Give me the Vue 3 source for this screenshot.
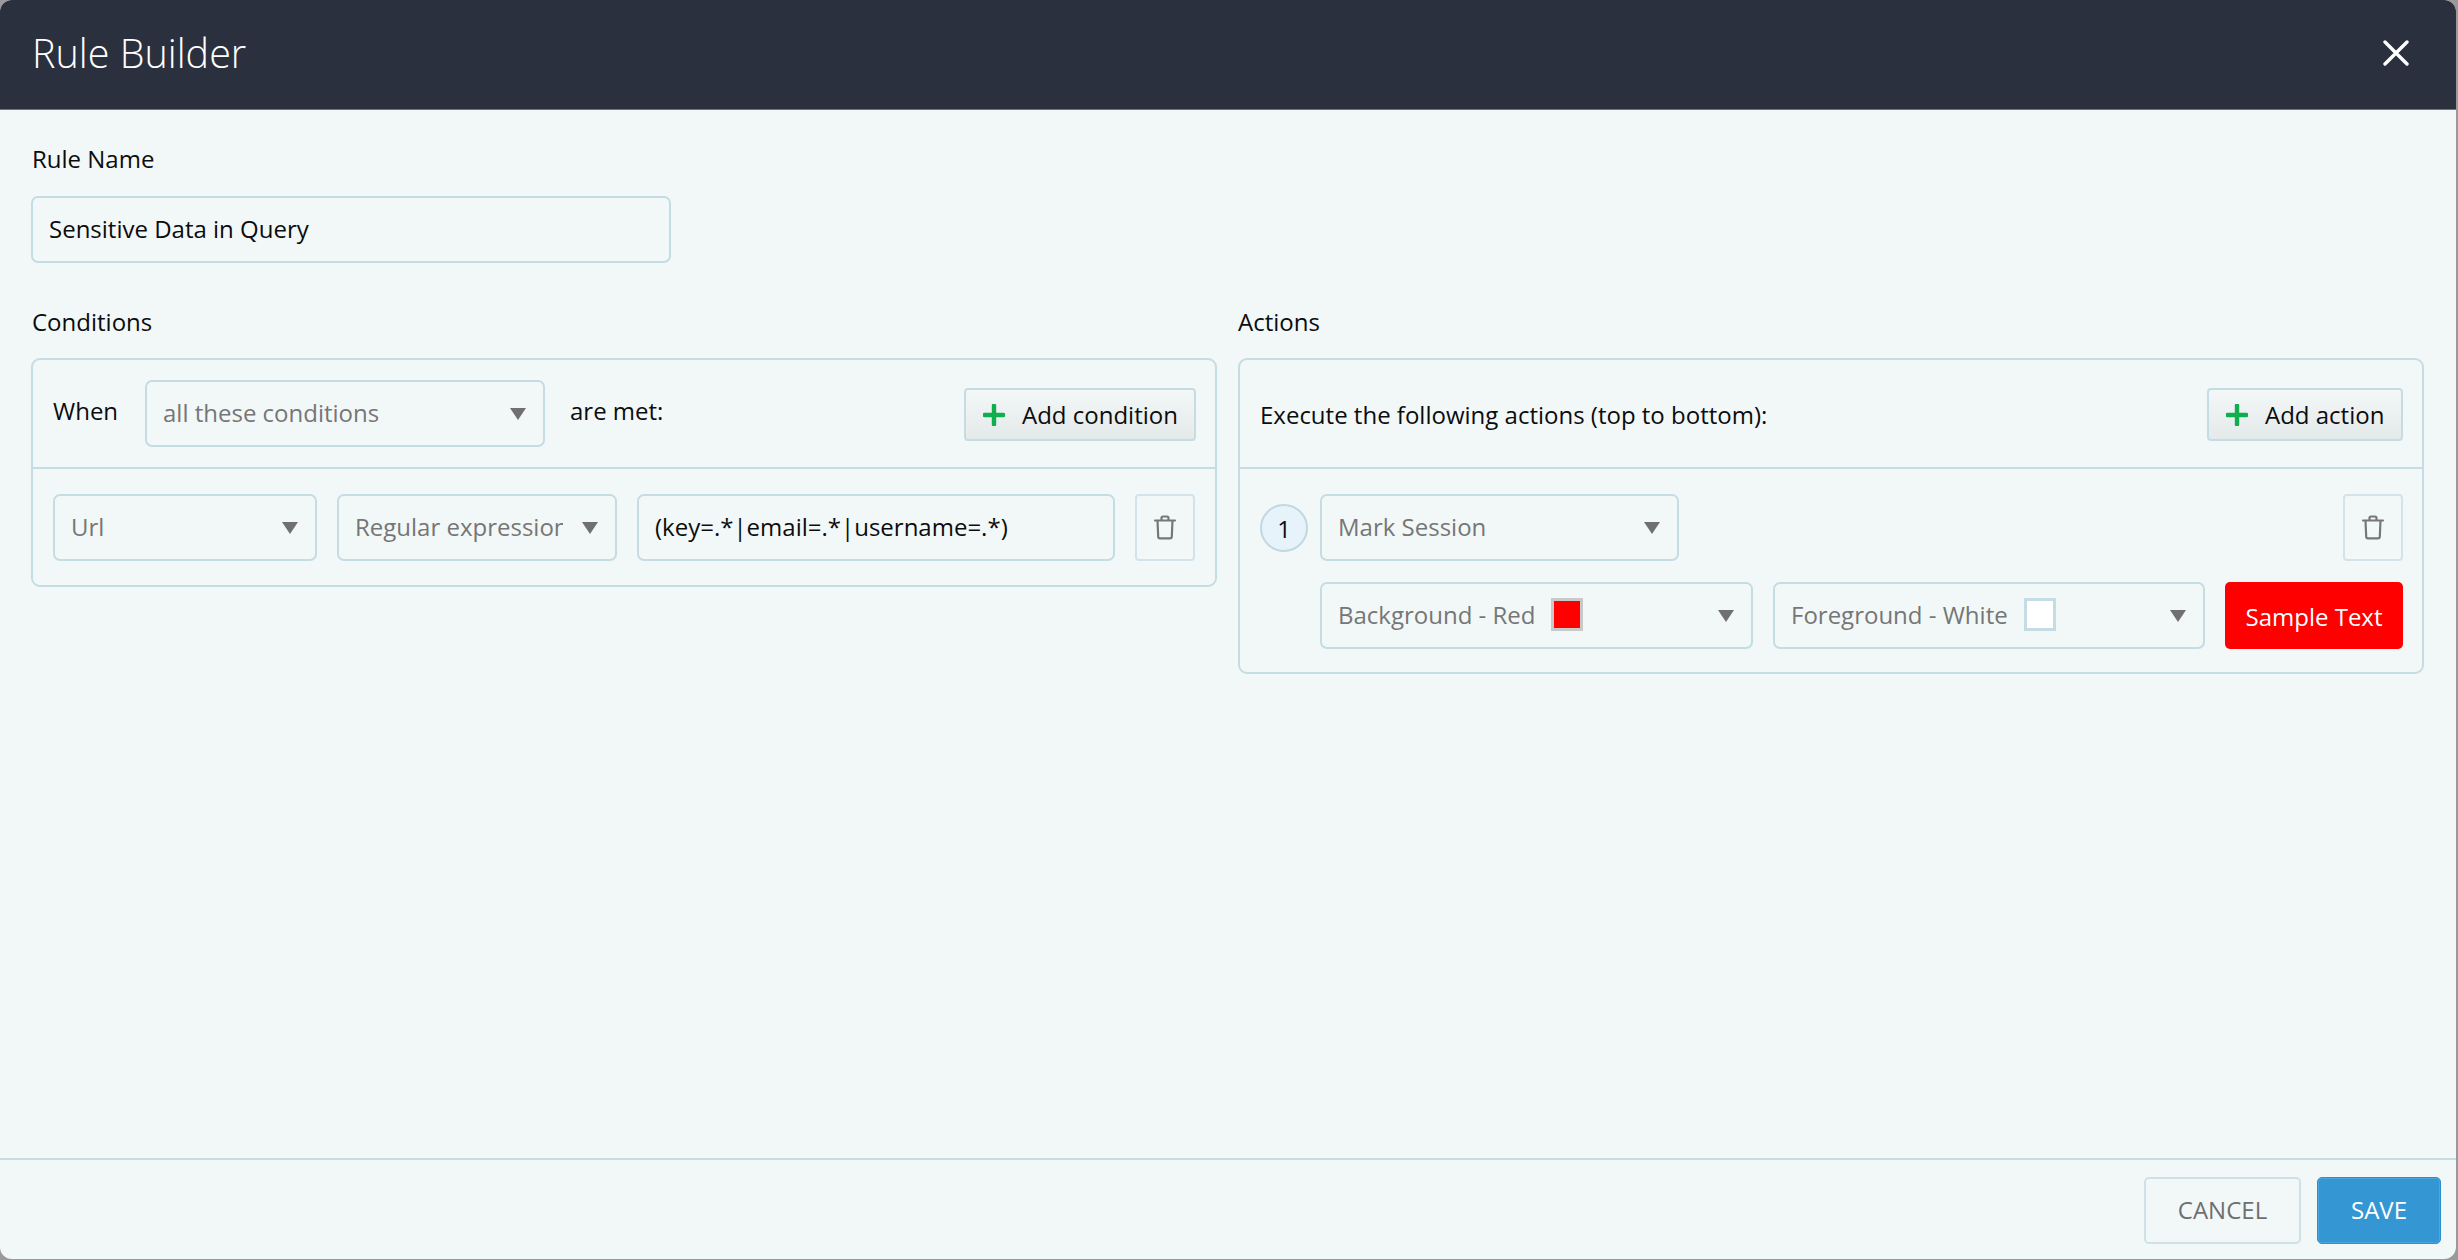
<script setup>
const trashPath = 'M2 5.500h20M8.500 5.500V3c0-.8.6-1.500 1.500-1.500h4c.9 0 1.500.7 1.500 1.500v2.500M4.500 5.500l.7 16c0 1 .8 1.900 1.800 1.900h10c1 0 1.800-.9 1.800-1.900l.7-16';
</script>

<template>
  <div class="shell">
    <div class="window">
      <header class="head">
        <h1 class="title">Rule Builder</h1>
        <svg class="close" width="26" height="26" viewBox="0 0 26 26" aria-hidden="true">
          <path d="M2 2L24 24M24 2L2 24" stroke="#fff" stroke-width="3.4" stroke-linecap="round" fill="none" />
        </svg>
      </header>

      <main class="content">
        <label class="label name-label">Rule Name</label>
        <div class="field name-field">Sensitive Data in Query</div>

        <div class="columns">
          <section class="col">
            <div class="label col-label">Conditions</div>
            <div class="panel">
              <div class="panel-head">
                <span class="when">When</span>
                <div class="field select all-sel"><span class="muted">all these conditions</span><i class="caret"></i></div>
                <span class="met">are met:</span>
                <button class="add add-cond">
                  <svg class="plus" width="22" height="22" viewBox="0 0 22 22"><path d="M11 1.500v19M1.500 11h19" stroke="#0fae4f" stroke-width="4.400" stroke-linecap="round" fill="none" /></svg>
                  Add condition
                </button>
              </div>
              <div class="panel-body cond-row">
                <div class="field select url-sel"><span class="muted">Url</span><i class="caret"></i></div>
                <div class="field select reg-sel"><span class="muted clip">Regular expression</span><i class="caret"></i></div>
                <div class="field value">(key=.*|email=.*|username=.*)</div>
                <button class="trash">
                  <svg width="24" height="25" viewBox="0 0 24 25"><path :d="trashPath" stroke="#777" stroke-width="2.200" fill="none" stroke-linecap="round" stroke-linejoin="round" /></svg>
                </button>
              </div>
            </div>
          </section>

          <section class="col">
            <div class="label col-label act-label">Actions</div>
            <div class="panel">
              <div class="panel-head">
                <span class="exec">Execute the following actions (top to bottom):</span>
                <button class="add add-act">
                  <svg class="plus" width="22" height="22" viewBox="0 0 22 22"><path d="M11 1.500v19M1.500 11h19" stroke="#0fae4f" stroke-width="4.400" stroke-linecap="round" fill="none" /></svg>
                  Add action
                </button>
              </div>
              <div class="panel-body action-body">
                <div class="num">1</div>
                <div class="action-rows">
                  <div class="action-row">
                    <div class="field select mark-sel"><span class="muted">Mark Session</span><i class="caret"></i></div>
                    <button class="trash">
                      <svg width="24" height="25" viewBox="0 0 24 25"><path :d="trashPath" stroke="#777" stroke-width="2.200" fill="none" stroke-linecap="round" stroke-linejoin="round" /></svg>
                    </button>
                  </div>
                  <div class="action-row second">
                    <div class="field select bg-sel"><span class="muted">Background - Red</span><span class="swatch red"></span><i class="caret"></i></div>
                    <div class="field select fg-sel"><span class="muted">Foreground - White</span><span class="swatch white"></span><i class="caret"></i></div>
                    <div class="sample">Sample Text</div>
                  </div>
                </div>
              </div>
            </div>
          </section>
        </div>
      </main>

      <footer class="foot">
        <button class="btn cancel">CANCEL</button>
        <button class="btn save">SAVE</button>
      </footer>
    </div>
  </div>
</template>

<style scoped>
.shell {
  width: 2458px;
  height: 1260px;
  box-sizing: border-box;
  padding: 0 2px 1px 0;
}
.window {
  height: 100%;
  display: flex;
  flex-direction: column;
  background: #f2f8f8;
  border-radius: 12px;
  overflow: hidden;
  font-family: "Open Sans", sans-serif;
  font-size: 24px;
  color: #0c0c0c;
}
.head {
  height: 110px;
  box-sizing: border-box;
  flex: none;
  background: #2b303f;
  border-bottom: 1px solid #70757f;
  display: flex;
  align-items: center;
  justify-content: space-between;
  padding: 0 47px 3px 32px;
}
.title {
  margin: 0;
  font-size: 39.500px;
  font-weight: 300;
  color: #fff;
}
.content {
  flex: 1;
  padding: 0 32px 0 31px;
}
.label {
  display: block;
  line-height: 32px;
  padding-left: 1px;
}
.name-label {
  margin-top: 33px;
  margin-bottom: 21px;
}
.field {
  box-sizing: border-box;
  height: 67px;
  border: 2px solid #c5dce4;
  border-radius: 7px;
  display: flex;
  align-items: center;
  padding: 0 16px 2px;
  white-space: nowrap;
  flex: none;
}
.name-field {
  width: 640px;
}
.columns {
  display: grid;
  grid-template-columns: 1186px 1186px;
  gap: 21px;
  margin-top: 43px;
}
.col-label {
  margin-bottom: 20px;
}
.act-label {
  padding-left: 0;
}
.panel {
  border: 2px solid #c5dce4;
  border-radius: 9px;
}
.panel-head {
  height: 109px;
  box-sizing: border-box;
  display: flex;
  align-items: center;
  padding: 0 19px 0 20px;
  border-bottom: 2px solid #c5dce4;
}
.when {
  width: 92px;
  margin-top: -6px;
}
.met {
  margin-left: 25px;
  margin-top: -6px;
}
.exec {
  margin-top: 2px;
}
.select {
  position: relative;
}
.all-sel {
  width: 400px;
}
.muted {
  color: #767676;
}
.caret {
  position: absolute;
  right: 17px;
  top: 50%;
  margin-top: -6px;
  width: 0;
  height: 0;
  border-left: 8px solid transparent;
  border-right: 8px solid transparent;
  border-top: 12px solid #707070;
}
.add {
  margin: 2px 0 0 auto;
  height: 53px;
  box-sizing: border-box;
  border: 2px solid #c5dce4;
  border-radius: 4px;
  background: linear-gradient(#f3f7f7, #e4e9ea);
  display: flex;
  align-items: center;
  padding: 0 0 0 17px;
  font: inherit;
  color: inherit;
  white-space: nowrap;
}
.add-cond {
  width: 232px;
}
.add-act {
  width: 196px;
}
.plus {
  margin-right: 17px;
  flex: none;
}
.panel-body {
  padding: 25px 19px 0 20px;
  box-sizing: border-box;
}
.cond-row {
  display: flex;
  gap: 20px;
  height: 116px;
}
.url-sel {
  width: 264px;
}
.reg-sel {
  width: 280px;
}
.clip {
  width: 208px;
  overflow: hidden;
  flex: none;
}
.value {
  width: 478px;
}
.trash {
  width: 60px;
  height: 67px;
  flex: none;
  box-sizing: border-box;
  border: 2px solid #d3e3e9;
  border-radius: 4px;
  background: transparent;
  padding: 0;
  display: flex;
  align-items: center;
  justify-content: center;
}
.action-body {
  display: flex;
  gap: 12px;
  height: 203px;
}
.num {
  width: 48px;
  height: 48px;
  margin-top: 10px;
  flex: none;
  box-sizing: border-box;
  border: 2px solid #c0d8e2;
  border-radius: 50%;
  background: #e6f3fb;
  display: flex;
  align-items: center;
  justify-content: center;
}
.action-rows {
  flex: 1;
  min-width: 0;
}
.action-row {
  display: flex;
  justify-content: space-between;
}
.second {
  margin-top: 21px;
}
.mark-sel {
  width: 359px;
}
.bg-sel {
  width: 433px;
}
.fg-sel {
  width: 432px;
}
.swatch {
  width: 32px;
  height: 33px;
  box-sizing: border-box;
  flex: none;
}
.red {
  margin-left: 15px;
  background: #ff0000;
  border: 3px solid #c9c9c9;
}
.white {
  margin-left: 16px;
  background: #fff;
  border: 3px solid #c5dce4;
}
.sample {
  flex: none;
  width: 178px;
  height: 67px;
  border-radius: 5px;
  background: #ff0000;
  color: #fff;
  display: flex;
  align-items: center;
  justify-content: center;
  padding-top: 2px;
  box-sizing: border-box;
}
.foot {
  flex: none;
  height: 101px;
  box-sizing: border-box;
  border-top: 2px solid #c5dce4;
  display: flex;
  justify-content: flex-end;
  gap: 16px;
  padding: 17px 15px 0 0;
}
.btn {
  height: 67px;
  box-sizing: border-box;
  border-radius: 5px;
  font: inherit;
  padding: 0 0 2px;
}
.cancel {
  width: 157px;
  border: 2px solid #cfe0e7;
  background: transparent;
  color: #6f6f6f;
}
.save {
  width: 124px;
  border: 1px solid #2f8fcc;
  box-shadow: inset 0 0 0 1px #4aa6de;
  background: #3497d3;
  color: #fff;
}
</style>

<style>
html, body {
  margin: 0;
  background: #9a9a9a;
}
</style>
